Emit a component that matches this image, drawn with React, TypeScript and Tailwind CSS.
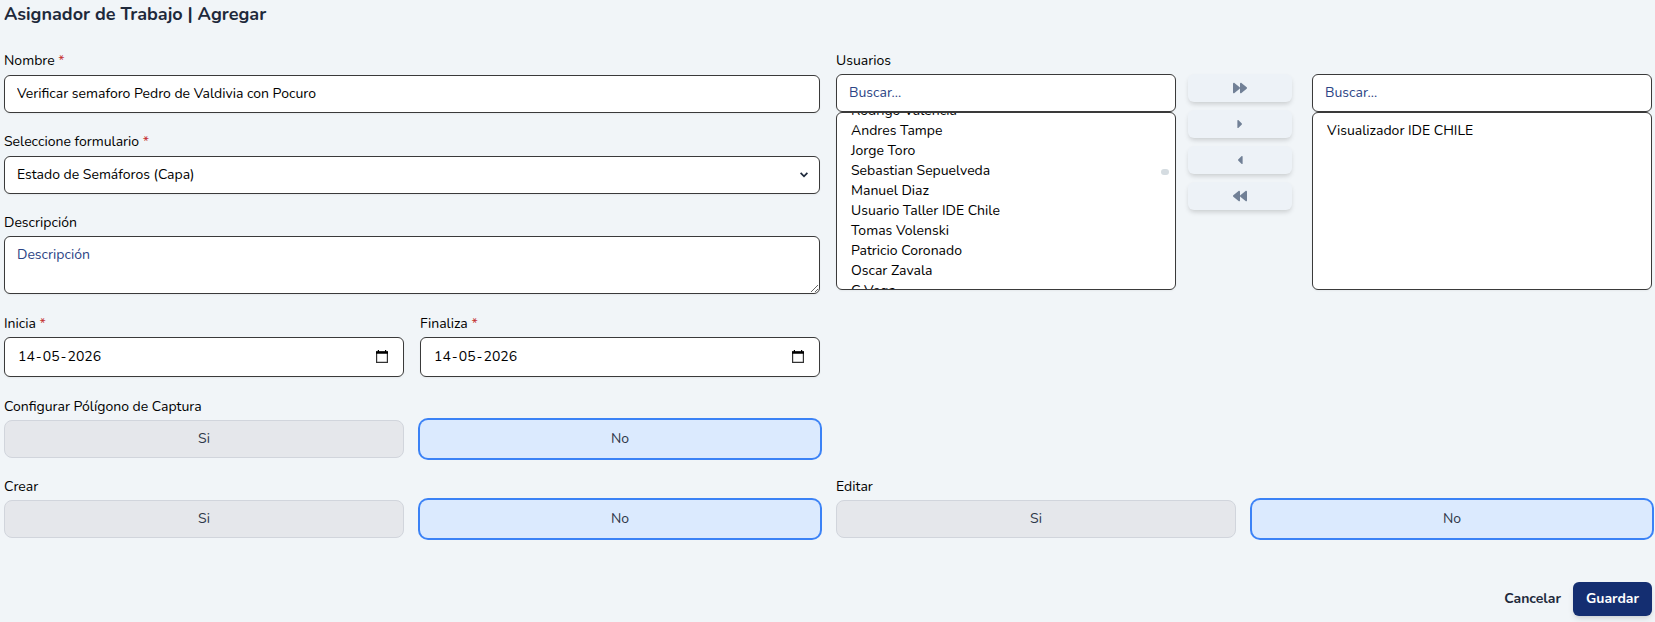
import { ReactNode } from "react";
import { FaForward, FaBackward, FaCaretRight, FaCaretLeft } from "react-icons/fa";
import { clsx } from "clsx";

const USERS = [
  "Rodrigo Valencia",
  "Andres Tampe",
  "Jorge Toro",
  "Sebastian Sepuelveda",
  "Manuel Diaz",
  "Usuario Taller IDE Chile",
  "Tomas Volenski",
  "Patricio Coronado",
  "Oscar Zavala",
  "C Vega",
];

const FIELD =
  "block w-full rounded-md border border-[#3a3a3a] bg-white px-3 text-black shadow-[0_1px_2px_rgba(0,0,0,0.05)] outline-none placeholder:text-[#2c4485]";

function Label({ children, required, className = "mb-[3px]" }: { children: ReactNode; required?: boolean; className?: string }) {
  return (
    <label className={clsx("block h-5 whitespace-nowrap leading-5 text-black", className)}>
      {children}
      {required && <span className="text-[#c53030]"> *</span>}
    </label>
  );
}

function DateField({ value }: { value: string }) {
  const [day, month, year] = value.split("-");
  return (
    <div className={clsx(FIELD, "flex h-10 items-center justify-between pb-px pl-[13px] pr-[15px]")}>
      <span className="pb-px">
        {day}
        <span className="mx-px">-</span>
        {month}
        <span className="mx-px">-</span>
        {year}
      </span>
      <svg width="12" height="13" viewBox="0 0 12 13" fill="none">
        <path d="M0.6 2h10.8v10.4H0.6z" stroke="#333" strokeWidth="1.2" />
        <path d="M0 1.2h12v2.6H0zM1.8 0H3v2H1.8zM9 0h1.2v2H9z" fill="#000" />
      </svg>
    </div>
  );
}

function YesNo() {
  return (
    <div className="grid grid-cols-2 gap-4">
      <button className="h-[38px] rounded-lg border border-gray-300 bg-gray-200 pb-0.5 text-[#2d3748]">Si</button>
      <button className="h-[38px] rounded-lg bg-blue-100 pb-0.5 text-[#2d3748] ring-2 ring-[#3b82f6]">No</button>
    </div>
  );
}

function MoveButton({ children }: { children: ReactNode }) {
  return (
    <button className="flex h-7 w-full items-center justify-center rounded-md bg-[#edf2f7] pb-px text-sm text-[#718096] shadow-[0_3px_5px_-1px_rgba(0,0,0,0.17)]">
      {children}
    </button>
  );
}

function ListPanel({ items, scrolled }: { items: string[]; scrolled?: boolean }) {
  return (
    <div className="w-[340px]">
      <input className={clsx(FIELD, "h-[38px] pb-0.5")} placeholder="Buscar..." />
      <div className="relative h-[178px] overflow-hidden rounded-md border border-[#3a3a3a] bg-white px-[14px] shadow-[0_1px_2px_rgba(0,0,0,0.05)]">
        <ul className={scrolled ? "-mt-3" : "pt-2"}>
          {items.map((name) => (
            <li key={name} className="h-5 whitespace-nowrap leading-5 text-black">
              {name}
            </li>
          ))}
        </ul>
        {scrolled && <span className="absolute right-1.5 top-14 h-1.5 w-2 rounded-full bg-[#d5dce1]" />}
      </div>
    </div>
  );
}

export default function App() {
  return (
    <div className="h-[622px] overflow-hidden bg-[#f1f5f8] pl-1 pr-[3px] font-['Nunito','Lato',sans-serif] text-[14px]">
      <h2 className="h-[50px] text-[18px] font-bold leading-7 text-[#1e293b]">
        Asignador de Trabajo | Agregar
      </h2>

      <div className="grid grid-cols-2 gap-4">
        <div className="pt-px">
          <Label required className="mb-1">Nombre</Label>
          <input
            className={clsx(FIELD, "h-[38px] pb-0.5")}
            defaultValue="Verificar semaforo Pedro de Valdivia con Pocuro"
          />

          <div className="mt-[19px]">
            <Label required className="mb-1">Seleccione formulario</Label>
            <div className={clsx(FIELD, "flex h-[38px] items-center justify-between pr-[11px]")}>
              <span className="pb-0.5">Estado de Semáforos (Capa)</span>
              <svg width="8" height="6" viewBox="0 0 8 6" fill="none" stroke="#1e293b" strokeWidth="1.8">
                <path d="M0.6 0.9 4 4.3 7.4 0.9" />
              </svg>
            </div>
          </div>

          <div className="mt-[19px]">
            <Label>Descripción</Label>
            <textarea className={clsx(FIELD, "h-[58px] resize py-2 leading-5")} placeholder="Descripción" />
          </div>

          <div className="mt-5 grid grid-cols-2 gap-4">
            <div>
              <Label required>Inicia</Label>
              <DateField value="14-05-2026" />
            </div>
            <div>
              <Label required>Finaliza</Label>
              <DateField value="14-05-2026" />
            </div>
          </div>

          <div className="mt-5">
            <Label>Configurar Pólígono de Captura</Label>
            <YesNo />
          </div>
        </div>

        <div className="pt-px">
          <Label>Usuarios</Label>
          <div className="flex">
            <ListPanel items={USERS} scrolled />
            <div className="ml-3 mr-5 flex w-[104px] flex-col gap-2">
              <MoveButton><FaForward /></MoveButton>
              <MoveButton><FaCaretRight /></MoveButton>
              <MoveButton><FaCaretLeft /></MoveButton>
              <MoveButton><FaBackward /></MoveButton>
            </div>
            <ListPanel items={["Visualizador IDE CHILE"]} />
          </div>
        </div>
      </div>

      <div className="mt-[19px] grid grid-cols-2 gap-4">
        <div>
          <Label>Crear</Label>
          <YesNo />
        </div>
        <div>
          <Label>Editar</Label>
          <YesNo />
        </div>
      </div>

      <div className="mt-11 flex items-center justify-end gap-3 font-bold">
        <button className="pb-0.5 text-[#1e293b]">Cancelar</button>
        <button className="h-[34px] w-[79px] rounded-md bg-[#142e71] pb-0.5 text-white shadow-md">Guardar</button>
      </div>
    </div>
  );
}
